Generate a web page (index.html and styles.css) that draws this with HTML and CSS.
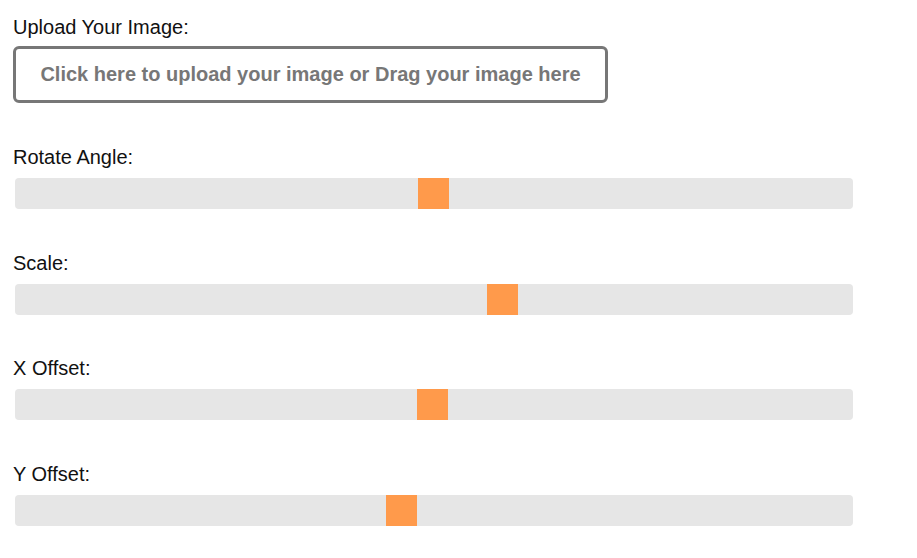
FILE: index.html
```html
<!DOCTYPE html>
<html lang="en">
<head>
<meta charset="utf-8">
<title>Image Editor</title>
<link rel="stylesheet" href="styles.css">
</head>
<body>
<div class="page">
  <div class="field field-upload">
    <label class="label" for="file">Upload Your Image:</label>
    <label class="upload" for="file">Click here to upload your image or Drag your image here</label>
    <input id="file" class="file" type="file" accept="image/*">
  </div>
  <div class="field">
    <label class="label" for="rotate">Rotate Angle:</label>
    <input id="rotate" class="slider" type="range" min="0" max="1000" value="499">
  </div>
  <div class="field">
    <label class="label" for="scale">Scale:</label>
    <input id="scale" class="slider" type="range" min="0" max="1000" value="585">
  </div>
  <div class="field">
    <label class="label" for="xoff">X Offset:</label>
    <input id="xoff" class="slider" type="range" min="0" max="1000" value="498">
  </div>
  <div class="field">
    <label class="label" for="yoff">Y Offset:</label>
    <input id="yoff" class="slider" type="range" min="0" max="1000" value="460">
  </div>
</div>
</body>
</html>
```
FILE: styles.css
```css
html, body {
  margin: 0;
  padding: 0;
  background: #ffffff;
}
body {
  font-family: "Liberation Sans", Arial, sans-serif;
  font-size: 20px;
  color: #111111;
}
.page {
  padding: 16px 0 0 13px;
  display: flex;
  flex-direction: column;
}
.field {
  display: flex;
  flex-direction: column;
  align-items: flex-start;
  margin-top: 42.8px;
}
.field-upload {
  margin-top: 0;
}
.label {
  line-height: 23px;
  font-size: 20px;
  color: #111111;
}
.upload {
  margin-top: 7px;
  box-sizing: border-box;
  height: 57px;
  width: 595px;
  padding: 14px 0;
  border: 3px solid #777777;
  border-radius: 6px;
  font-weight: bold;
  font-size: 20px;
  line-height: 23px;
  color: #777777;
  text-align: center;
  cursor: pointer;
}
.file {
  display: none;
}
.slider {
  -webkit-appearance: none;
  appearance: none;
  margin: 9px 0 0 2px;
  width: 838px;
  height: 31px;
  background: #e6e6e6;
  border-radius: 4px;
  outline: none;
}
.slider::-webkit-slider-thumb {
  -webkit-appearance: none;
  appearance: none;
  width: 31px;
  height: 31px;
  background: #ff9a4b;
  border: none;
  border-radius: 0;
  cursor: pointer;
}
.slider::-moz-range-thumb {
  width: 31px;
  height: 31px;
  background: #ff9a4b;
  border: none;
  border-radius: 0;
}
```
